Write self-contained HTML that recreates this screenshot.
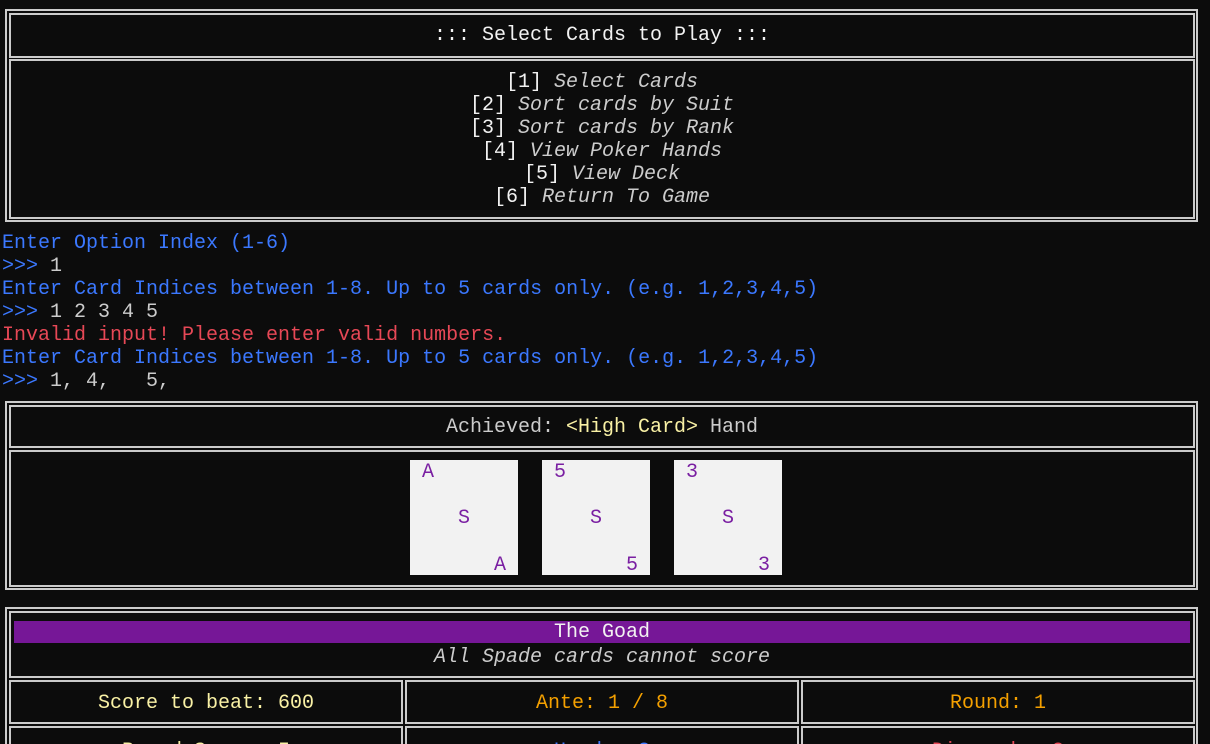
<!DOCTYPE html>
<html><head><meta charset="utf-8"><style>
html,body{margin:0;padding:0;background:#0c0c0c;width:1210px;height:744px;overflow:hidden;position:relative}
body{font-family:"Liberation Mono",monospace;font-size:20px;color:#cccccc}
.b{position:absolute;border:2px solid #cccccc;box-sizing:border-box}
.t{position:absolute;line-height:23px;height:23px;white-space:pre;margin-top:2px}
.c{text-align:center}
i{font-style:italic}
.w{color:#f2f2f2}
.bl{color:#3b78ff}.rd{color:#e74856}.yl{color:#f9f1a5}.or{color:#f4a000}
.card{position:absolute;background:#f2f2f2;width:108px;height:115px;top:460px;color:#7a1fa2}
.card span{position:absolute;line-height:23px;margin-top:1px}
</style></head><body>
<div class="b" style="left:5px;top:9px;width:1193px;height:213px"></div>
<div class="b" style="left:9px;top:13px;width:1186px;height:45px"></div>
<div class="b" style="left:9px;top:59px;width:1186px;height:160px"></div>
<div class="t c w" style="left:9px;width:1186px;top:22px">::: Select Cards to Play :::</div>
<div class="t c" style="left:9px;width:1186px;top:69px"><span class="w">[1]</span> <i>Select Cards</i></div>
<div class="t c" style="left:9px;width:1186px;top:92px"><span class="w">[2]</span> <i>Sort cards by Suit</i></div>
<div class="t c" style="left:9px;width:1186px;top:115px"><span class="w">[3]</span> <i>Sort cards by Rank</i></div>
<div class="t c" style="left:9px;width:1186px;top:138px"><span class="w">[4]</span> <i>View Poker Hands</i></div>
<div class="t c" style="left:9px;width:1186px;top:161px"><span class="w">[5]</span> <i>View Deck</i></div>
<div class="t c" style="left:9px;width:1186px;top:184px"><span class="w">[6]</span> <i>Return To Game</i></div>
<div class="t bl" style="left:2px;top:230px">Enter Option Index (1-6)</div>
<div class="t" style="left:2px;top:253px"><span class="bl">&gt;&gt;&gt;</span> 1</div>
<div class="t bl" style="left:2px;top:276px">Enter Card Indices between 1-8. Up to 5 cards only. (e.g. 1,2,3,4,5)</div>
<div class="t" style="left:2px;top:299px"><span class="bl">&gt;&gt;&gt;</span> 1 2 3 4 5</div>
<div class="t rd" style="left:2px;top:322px">Invalid input! Please enter valid numbers.</div>
<div class="t bl" style="left:2px;top:345px">Enter Card Indices between 1-8. Up to 5 cards only. (e.g. 1,2,3,4,5)</div>
<div class="t" style="left:2px;top:368px"><span class="bl">&gt;&gt;&gt;</span> 1, 4,   5,</div>
<div class="b" style="left:5px;top:401px;width:1193px;height:189px"></div>
<div class="b" style="left:9px;top:405px;width:1186px;height:43px"></div>
<div class="b" style="left:9px;top:450px;width:1186px;height:137px"></div>
<div class="t c" style="left:9px;width:1186px;top:414px">Achieved: <span class="yl">&lt;High Card&gt;</span> Hand</div>
<div class="card" style="left:410px"><span style="left:12px;top:0">A</span><span style="left:48px;top:46px">S</span><span style="left:84px;top:93px">A</span></div>
<div class="card" style="left:542px"><span style="left:12px;top:0">5</span><span style="left:48px;top:46px">S</span><span style="left:84px;top:93px">5</span></div>
<div class="card" style="left:674px"><span style="left:12px;top:0">3</span><span style="left:48px;top:46px">S</span><span style="left:84px;top:93px">3</span></div>
<div class="b" style="left:5px;top:607px;width:1193px;height:160px"></div>
<div class="b" style="left:9px;top:611px;width:1186px;height:67px"></div>
<div style="position:absolute;left:14px;top:621px;width:1176px;height:22px;background:#761797"></div>
<div class="t c w" style="left:9px;width:1186px;top:619px">The Goad</div>
<div class="t c" style="left:9px;width:1186px;top:644px"><i>All Spade cards cannot score</i></div>
<div class="b" style="left:9px;top:680px;width:394px;height:44px"></div>
<div class="b" style="left:405px;top:680px;width:394px;height:44px"></div>
<div class="b" style="left:801px;top:680px;width:394px;height:44px"></div>
<div class="t c yl" style="left:9px;width:394px;top:690px">Score to beat: 600</div>
<div class="t c or" style="left:405px;width:394px;top:690px">Ante: 1 / 8</div>
<div class="t c or" style="left:801px;width:394px;top:690px">Round: 1</div>
<div class="b" style="left:9px;top:726px;width:394px;height:44px"></div>
<div class="b" style="left:405px;top:726px;width:394px;height:44px"></div>
<div class="b" style="left:801px;top:726px;width:394px;height:44px"></div>
<div class="t c yl" style="left:9px;width:394px;top:738px">Round Score: 5</div>
<div class="t c bl" style="left:405px;width:394px;top:738px">Hands: 3</div>
<div class="t c rd" style="left:801px;width:394px;top:738px">Discards: 3</div>
</body></html>
